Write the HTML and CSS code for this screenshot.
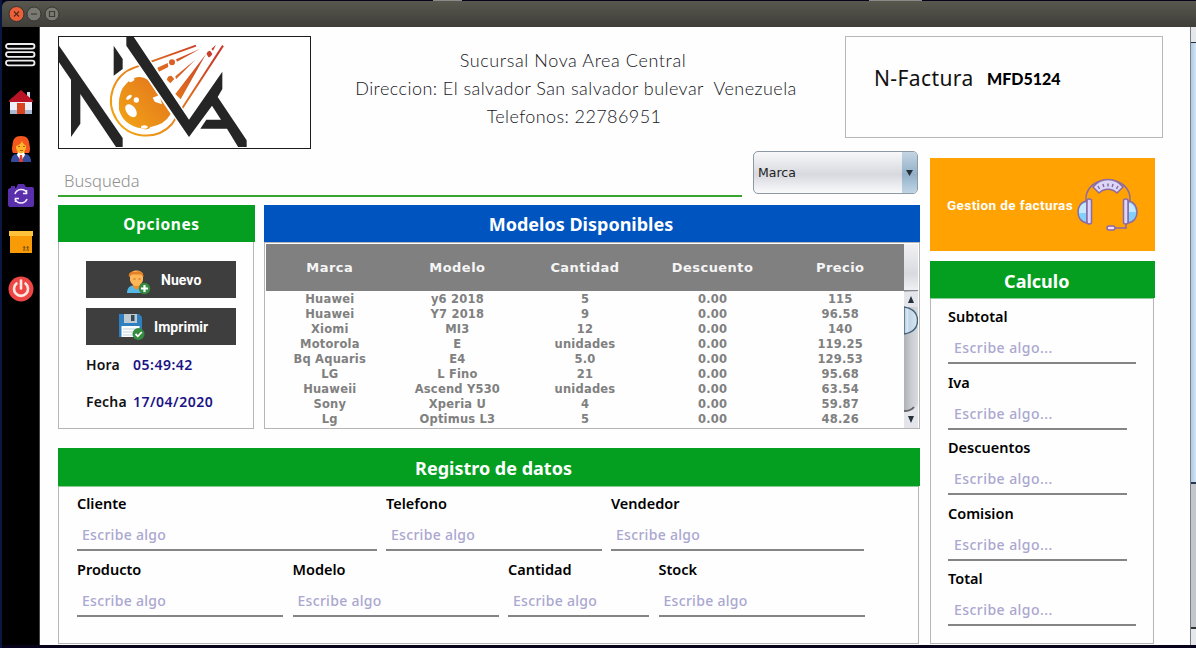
FILE: index.html
```html
<!DOCTYPE html>
<html lang="es">
<head>
<meta charset="utf-8">
<title>Nova - Facturas</title>
<link rel="stylesheet" href="styles.css">
</head>
<body>
<div class="window">
  <div class="titlebar">
    <svg width="60" height="22" viewBox="0 0 60 22">
      <circle cx="10.500" cy="11" r="7.5" fill="#ec6039" stroke="#34332e"/>
      <path d="M8 8.500l5 5m0-5l-5 5" stroke="#5b2b1b" stroke-width="1.3"/>
      <circle cx="28" cy="11" r="7" fill="#7b7a72" stroke="#34332e"/>
      <path d="M25 11h6" stroke="#3c3b37" stroke-width="1.2"/>
      <circle cx="46" cy="11" r="7" fill="#7b7a72" stroke="#34332e"/>
      <path d="M43.500 8.500h5v5h-5z" fill="none" stroke="#3c3b37" stroke-width="1.2"/>
    </svg>
  </div>
  <div class="frame">
    <nav class="sidebar">
      <svg class="menu" width="31" height="24" viewBox="0 0 31 24"><g fill="#000" stroke="#eee" stroke-width="1.800"><rect x="1" y="1" width="28.500" height="4.600" rx="2.300"/><rect x="1" y="9.200" width="28.500" height="4.600" rx="2.300"/><rect x="1" y="17.700" width="28.500" height="4.600" rx="2.300"/></g></svg>
      <svg class="home" width="26" height="24" viewBox="0 0 26 24"><path d="M19 2h3v7h-3z" fill="#d5dcf0"/><path d="M2 11h22v9H2z" fill="#edf0fb"/><path d="M2 20h22v4H2z" fill="#a9b9d4"/><path d="M9 13h8v11H9z" fill="#d94420"/><path d="M13 0l12 10.500v1.500H1v-1.500z" fill="#b81425"/></svg>
      <svg class="user" width="22" height="28" viewBox="0 0 22 28"><path d="M11 1c6 0 8 3 8.500 9 .5 3 1 5-.5 8H3c-1.500-3-1-5-.5-8C3 4 5 1 11 1z" fill="#f4581c"/><path d="M1 27c0-5 2-8 6-8h8c4 0 6 3 6 8z" fill="#354b9d"/><path d="M8 17h6l1 3-4 6-4-6z" fill="#fff"/><path d="M10 20h2l1 7h-4z" fill="#e83f2b"/><ellipse cx="11" cy="12" rx="5" ry="6.500" fill="#ffb52c"/><path d="M6 11c4-1 5-3 6-5 1 3 3 4 4 5l-1-6-5-2-4 3z" fill="#f4581c"/><path d="M8 11.500h2m3 0h2m-5 4h3" stroke="#b8551e"/></svg>
      <svg class="camera" width="26" height="23" viewBox="0 0 26 23"><path d="M3 2h4v2H3zM1 5q0-1 1-1h6l2-4h6l2 3h6q2 0 2 2v16q0 2-2 2H2q-2 0-2-2V5z" fill="#5a2fac"/><path d="M7 10a6.500 6.500 0 0 1 12-1m0 6a6.500 6.500 0 0 1-12 0M18.500 6v3.500H15M7.500 18v-3.500H11" fill="none" stroke="#f5f1ff" stroke-width="1.600"/></svg>
      <svg class="box" width="24" height="24" viewBox="0 0 24 24"><path d="M1 5h22v18H1z" fill="#f99b06"/><path d="M0 1h24v5H0z" fill="#ffc23b"/><path d="M14 20h2.500m1 0H20M15.200 19v-2.500m3.500 2.500v-2.500m-4.500 1l1-1 1 1m1.500 0l1-1 1 1" fill="none" stroke="#6b4310"/></svg>
      <svg class="power" width="26" height="26" viewBox="0 0 26 26"><circle cx="13" cy="13" r="12.500" fill="#ed4645"/><path d="M8.500 7.500a7 7 0 1 0 9 0M13 4.500v8" fill="none" stroke="#ffe9e0" stroke-width="2.600" stroke-linecap="round"/></svg>
    </nav>
    <main class="content">
      <header class="header">
        <div class="logo">
          <svg width="251" height="110" viewBox="178 112 751 330">
            <defs><linearGradient id="fire" gradientUnits="userSpaceOnUse" x1="360" y1="390" x2="620" y2="150"><stop offset="0" stop-color="#f3a515"/><stop offset=".45" stop-color="#e67f1c"/><stop offset="1" stop-color="#c93b2a"/></linearGradient></defs>
            <circle cx="433" cy="308" r="108" fill="#fff"/>
            <path d="M588 138L405 203A105 105 0 1 0 516 373L669 138" fill="none" stroke="url(#fire)" stroke-width="6"/>
            <path d="M368 265Q390 238 400 236Q425 226 443 240L512 343Q494 375 452 382Q443 394 424 386Q370 376 357 330Q354 290 368 265z" fill="url(#fire)"/>
            <g fill="#fff"><ellipse cx="393" cy="333" rx="14" ry="22" transform="rotate(-38 393 333)"/><ellipse cx="387" cy="293" rx="10" ry="5" transform="rotate(-42 387 293)"/><circle cx="409" cy="301" r="8"/><ellipse cx="395" cy="241" rx="9" ry="5" transform="rotate(-28 395 241)"/><ellipse cx="433" cy="382" rx="10" ry="5"/><path d="M458 294l20-8 8 28-22-8z"/></g>
            <g fill="url(#fire)"><path d="M472 204l31-14 2 12-28 14zM528 179l73-32-70 39zM501 241q0-13 13-13l9 10-12 13zM526 230l60-50-58 59zM526 283l92-120-76 136zM620 164q0-9 10-11l7 9q-5 13-12 10zM634 148l14-13-9 18z"/><circle cx="516" cy="188" r="9"/></g>
            <g fill="#252525"><path d="M177 138l191 277v30h-18L241 283v89l-28 40V240l-36-52z"/><path d="M341 138l27 40v30l-27 20z"/></g>
            <path d="M379 107h19l169 253 100-144v52l-14 24 87 130v26h-22l-37-61h-80l18-27h44l-27-42-69 94-188-274z" fill="#252525" stroke="#fff" stroke-width="8" paint-order="stroke"/>
          </svg>
        </div>
        <div class="address">
          <p class="branch">Sucursal Nova Area Central</p>
          <p class="street">Direccion: El salvador San salvador bulevar&nbsp; Venezuela</p>
          <p class="phone">Telefonos: 22786951</p>
        </div>
        <div class="invoice"><span class="invoice-label">N-Factura</span><b class="invoice-code">MFD5124</b></div>
      </header>
      <div class="columns">
        <div class="left">
          <div class="searchrow">
            <div class="search">Busqueda</div>
            <div class="combo"><span>Marca</span><i><svg width="7" height="8" viewBox="0 0 8 9"><path d="M0 1h8L4 8z" fill="#25303a"/></svg></i></div>
          </div>
          <div class="panels">
            <section class="options">
              <h2 class="bar small">Opciones</h2>
              <div class="body">
                <div class="btn new"><svg width="25" height="26" viewBox="0 0 25 26"><path d="M1 24c0-6 4-8 9-8s9 2 9 8z" fill="#55b9e8"/><path d="M7 13h7v5l-3.500 3L7 18z" fill="#ef8d2e"/><path d="M4 6c0-6 13-6 13 0v5c-1 4-4 6-6.500 6S5 15 4 11z" fill="#ffb657"/><path d="M3 8C2 3 6 2 9 3c4-2 9 0 8.500 5L15 5.500H6z" fill="#e28127"/><path d="M7.500 10h2m3 0h2" stroke="#b5642a"/><circle cx="18.500" cy="19.500" r="5.700" fill="#358c40"/><path d="M18.500 16v7M15 19.500h7" stroke="#fff" stroke-width="2.200"/></svg><span>Nuevo</span></div>
                <div class="btn print"><svg width="27" height="28" viewBox="0 0 27 28"><path d="M1 1h20l3 3v20H1z" fill="#2f80c3"/><path d="M6 1h13v9H6z" fill="#bfc9ce"/><path d="M13 2h3.500v6H13z" fill="#354a58"/><path d="M3.500 13h18v11h-18z" fill="#fff"/><path d="M5 16h14M5 19h14M5 22h10" stroke="#bfd1da"/><circle cx="20.500" cy="21" r="6" fill="#358c40"/><path d="M17.500 21l2.300 2.300 4-4.300" fill="none" stroke="#fff" stroke-width="1.800"/></svg><span>Imprimir</span></div>
                <div class="time"><b>Hora</b><span class="hour">05:49:42</span></div>
                <div class="time"><b>Fecha</b><span class="date">17/04/2020</span></div>
              </div>
            </section>
            <section class="models">
              <h2 class="bar blue">Modelos Disponibles</h2>
              <div class="tablebox">
                <div class="table">
                  <div class="row head"><span>Marca</span><span>Modelo</span><span>Cantidad</span><span>Descuento</span><span>Precio</span></div>
                  <div class="row"><span>Huawei</span><span>y6 2018</span><span>5</span><span>0.00</span><span>115</span></div>
                  <div class="row"><span>Huawei</span><span>Y7 2018</span><span>9</span><span>0.00</span><span>96.58</span></div>
                  <div class="row"><span>Xiomi</span><span>MI3</span><span>12</span><span>0.00</span><span>140</span></div>
                  <div class="row"><span>Motorola</span><span>E</span><span>unidades</span><span>0.00</span><span>119.25</span></div>
                  <div class="row"><span>Bq Aquaris</span><span>E4</span><span>5.0</span><span>0.00</span><span>129.53</span></div>
                  <div class="row"><span>LG</span><span>L Fino</span><span>21</span><span>0.00</span><span>95.68</span></div>
                  <div class="row"><span>Huaweii</span><span>Ascend Y530</span><span>unidades</span><span>0.00</span><span>63.54</span></div>
                  <div class="row"><span>Sony</span><span>Xperia U</span><span>4</span><span>0.00</span><span>59.87</span></div>
                  <div class="row"><span>Lg</span><span>Optimus L3</span><span>5</span><span>0.00</span><span>48.26</span></div>
                </div>
                <div class="scroll">
                  <div class="corner"></div>
                  <svg width="14" height="137" viewBox="0 0 14 137">
                    <defs>
                      <linearGradient id="track"><stop offset="0" stop-color="#adb1b5"/><stop offset=".5" stop-color="#c9ccd0"/><stop offset="1" stop-color="#d8dbde"/></linearGradient>
                      <linearGradient id="thumb"><stop offset="0" stop-color="#b0c8da"/><stop offset=".3" stop-color="#e2edf6"/><stop offset=".35" stop-color="#bfd4e5"/><stop offset="1" stop-color="#d9e8f2"/></linearGradient>
                    </defs>
                    <path d="M0 0h14v137H0z" fill="url(#track)"/><path d="M0 1h14v15H0zM0 121h14v16H0z" fill="#e3e5ea"/>
                    <path d="M0 120q9 0 14-7v8H0z" fill="#e3e5ea"/><path d="M0 120q7 0 10-4" stroke="#62666a" stroke-width="2" fill="none"/>
                    <path d="M0 16Q13.500 18 13.500 29.500T0 43z" fill="url(#thumb)" stroke="#426179" stroke-width="1.400"/>
                    <path d="M4 12L7 5l3 7zM4 125h6l-3 7z" fill="#25303a"/>
                  </svg>
                </div>
              </div>
            </section>
          </div>
          <section class="register">
            <h2 class="bar">Registro de datos</h2>
            <div class="body">
              <div class="fields first">
                <label class="field"><b>Cliente</b><span>Escribe algo</span></label>
                <label class="field"><b>Telefono</b><span>Escribe algo</span></label>
                <label class="field"><b>Vendedor</b><span>Escribe algo</span></label>
              </div>
              <div class="fields second">
                <label class="field"><b>Producto</b><span>Escribe algo</span></label>
                <label class="field"><b>Modelo</b><span>Escribe algo</span></label>
                <label class="field"><b>Cantidad</b><span>Escribe algo</span></label>
                <label class="field"><b>Stock</b><span>Escribe algo</span></label>
              </div>
            </div>
          </section>
        </div>
        <aside class="right">
          <div class="manage"><span>Gestion de facturas</span>
            <svg width="62" height="54" viewBox="0 0 62 54">
              <g fill="none" stroke="#8b6aa5" stroke-width="1.500">
                <path d="M9 23C8 10 18 2 31 2s23 8 22 21M49 44v6H38" />
                <path d="M16 9c8-10 22-10 30 0l-6 6c-5-5-13-5-18 0z" fill="#dcd7f7"/>
                <path d="M10 23c-12 1-12 21 0 22z" fill="#83d0fa"/><path d="M51 23c12 1 12 21 0 22z" fill="#83d0fa"/>
                <rect x="10" y="21" width="4.500" height="25" rx="2" fill="#dcd7f7"/><rect x="46.500" y="21" width="4.500" height="25" rx="2" fill="#dcd7f7"/>
                <rect x="30" y="48" width="8" height="4" rx="2" fill="#f5dcf0"/>
                <path d="M21 8l1.500 3M26 6l.8 3M31 5.500v3M36 6l-.8 3M41 8l-1.500 3"/>
              </g>
              <path d="M3 29q2-4 6-4v10H2q0-4 1-6zM52 25q5 0 7 9h-7z" fill="#c4e8fc"/>
            </svg>
          </div>
          <section class="calc">
            <h2 class="bar">Calculo</h2>
            <div class="body">
              <label class="field wide"><b>Subtotal</b><span>Escribe algo...</span></label>
              <label class="field"><b>Iva</b><span>Escribe algo...</span></label>
              <label class="field"><b>Descuentos</b><span>Escribe algo...</span></label>
              <label class="field"><b>Comision</b><span>Escribe algo...</span></label>
              <label class="field wide"><b>Total</b><span>Escribe algo...</span></label>
            </div>
          </section>
        </aside>
      </div>
    </main>
    <div class="pagescroll"><div class="up"></div><div class="thumb"></div><div class="track"></div><div class="down"></div></div>
  </div>
</div>
</body>
</html>
```
FILE: styles.css
```css
* { box-sizing: border-box; }
body { margin: 0; background: #08031c; font-family: "Noto Sans", sans-serif; }
h2, p { margin: 0; }
svg { display: block; flex: none; }
.window { height: 648px; padding: 1px 0 3px 2px; background: linear-gradient(90deg, transparent 433px, #8a8a86 433px 462px, transparent 462px 869px, #8a8a86 869px 922px, transparent 922px) 0 0 / 100% 1px no-repeat, linear-gradient(90deg, #0a1740 0 2px, #08031c 2px); overflow: hidden; }
.titlebar { height: 26px; padding: 2px 0 0 4px; border-radius: 6px 0 0 0; background: linear-gradient(#59584f, #3e3d38); }
.frame { display: flex; height: 618px; background: #fff; }
.sidebar { width: 38px; flex: none; background: #000; display: flex; flex-direction: column; align-items: center; padding-top: 16px; border-right: 1px solid #444; }
.home { margin-top: 23px; }
.user { margin-top: 21px; }
.camera { margin-top: 21px; }
.box { margin-top: 23px; }
.power { margin-top: 22px; }
.content { flex: 1; min-width: 0; padding: 9px 0 0 18px; background: #fefefe; overflow: hidden; }
.header { display: flex; height: 113px; }
.logo { width: 253px; height: 113px; border: 1px solid #1c1c1c; background: #fff; overflow: hidden; }
.address { width: 524px; margin-right: 10px; padding-top: 10px; text-align: center; font: 300 18px/28px Lato, sans-serif; color: #15151c; white-space: nowrap; }
.branch { letter-spacing: .6px; }
.street { letter-spacing: .45px; padding-left: 6px; }
.phone { letter-spacing: .4px; padding-left: 2px; }
.invoice { width: 318px; height: 102px; border: 1px solid #b7b7b7; padding: 26px 0 0 28px; display: flex; align-items: center; align-self: flex-start; align-items: flex-start; color: #111; }
.invoice-label { font-size: 21px; line-height: 30px; width: 113px; letter-spacing: .4px; }
.invoice-code { font: 900 16px/32px Lato, sans-serif; color: #000; }
.columns { display: flex; gap: 10px; }
.left { width: 862px; }
.searchrow { height: 56px; display: flex; gap: 11px; padding-top: 2px; }
.search { width: 684px; height: 46px; border-bottom: 2px solid #35a52f; padding: 18px 0 0 6px; font: 300 16.500px/24px "Noto Sans", sans-serif; color: #909090; }
.combo { width: 165px; height: 43px; border: 1.500px solid #8d99a5; border-radius: 5px; background: linear-gradient(#f8f8fa, #d7d9de 55%, #fafafc); display: flex; justify-content: space-between; align-items: center; padding-left: 4px; font: 13px "DejaVu Sans", sans-serif; font-size: 12.500px; color: #222; overflow: hidden; }
.combo i { width: 15px; height: 100%; background: linear-gradient(#c4d5e2, #93b0c8 55%, #c1d6e5); display: flex; align-items: center; justify-content: center; }
.panels { display: flex; gap: 9px; height: 224px; }
.options { width: 197px; }
.bar { height: 37px; background: #049f20; color: #fff; text-align: center; font: 700 18px/38px "Noto Sans", sans-serif; }
.bar.small { font-size: 15.500px; padding-left: 10px; letter-spacing: .6px; }
.bar.blue { background: #0054c0; padding-right: 22px; }
.options .body { width: 196px; height: 187px; border: 1px solid #b5b5b5; border-top: 0; padding: 19px 0 0 27px; }
.btn { width: 150px; height: 37px; background: #3e3e3e; color: #fff; display: flex; align-items: center; font: 700 14px "Roboto", sans-serif; letter-spacing: .05px; }
.btn + .btn { margin-top: 10px; }
.new { padding-left: 40px; }
.new svg { margin: 5px 10px 0 0; }
.print { padding-left: 32px; }
.print svg { margin-right: 9px; }
.time { display: flex; height: 37px; padding-top: 1px; align-items: center; font-size: 14px; font-weight: 600; color: #1a1386; white-space: nowrap; letter-spacing: .5px; }
.time b { width: 47px; color: #111; font-weight: 600; letter-spacing: .2px; }
.models { width: 656px; }
.tablebox { height: 187px; border: 1px solid #b5b5b5; display: flex; padding: 1px 0 0 1px; }
.table { width: 638px; font: 700 11.500px/15px "DejaVu Sans", sans-serif; color: #808080; }
.row { display: grid; grid-template-columns: repeat(5, 1fr); text-align: center; height: 15px; letter-spacing: .2px; }
.head { height: 47px; line-height: 47px; background: #808080; color: #f5f5f5; font-size: 13px; letter-spacing: .45px; margin-bottom: 1px; }
.scroll { width: 14px; }
.corner { height: 47px; background: linear-gradient(#f1f1f4, #d8dae0 65%, #f0f0f3); border-bottom: 1px solid #82878c; }
.register { margin-top: 19px; }
.register .bar { height: 38px; line-height: 40px; padding-left: 9px; }
.register .body { height: 158px; width: 861px; border: 1px solid #b5b5b5; border-top-color: #8acb98; padding: 4px 0 0 18px; }
.fields { display: grid; }
.first { grid-template-columns: 300px 216px 253px; column-gap: 9px; }
.second { grid-template-columns: 206px 206px 141px 206px; column-gap: 9.500px; }
.field { display: block; height: 65.500px; color: #000; }
.field b { display: block; height: 26px; font: 600 14.500px/25px "Noto Sans", sans-serif; }
.field span { display: block; height: 34px; border-bottom: 2px solid #858585; padding: 6px 0 0 5px; font: 500 14px/24px "Noto Sans", sans-serif; color: #aaa7d0; letter-spacing: .3px; }
.right { width: 224.500px; padding-top: 9px; }
.manage { height: 93px; background: #ffa202; display: flex; align-items: center; padding-left: 17px; color: #fff; font: 700 13.500px Roboto, sans-serif; white-space: nowrap; letter-spacing: .4px; }
.manage span { width: 130px; }
.calc { margin-top: 10px; }
.calc .bar { height: 37px; line-height: 40px; padding-right: 11px; }
.calc .body { width: 224px; height: 346px; border: 1px solid #b5b5b5; border-top-color: #8acb98; padding: 5px 0 0 17px; }
.calc .field { width: 179px; }
.calc .field span { padding-left: 6px; letter-spacing: .45px; }
.calc .wide { width: 188px; }
.pagescroll { width: 6px; flex: none; display: flex; flex-direction: column; border-left: 1px solid #777f88; }
.up { height: 16px; background: #e5e7eb; border-bottom: 1px solid #203040; }
.thumb { height: 441px; background: linear-gradient(90deg, #aecbe3, #d3e3f1); border-bottom: 2px solid #26384b; }
.track { flex: 1; background: #c3c6cb; border-bottom: 2px solid #333; }
.down { height: 16px; background: #e5e7eb; }
```
